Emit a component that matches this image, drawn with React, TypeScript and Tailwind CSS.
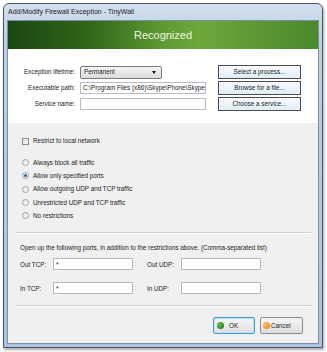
import React from 'react'

const FONT = { fontFamily: '"Liberation Sans", Arial, sans-serif' }

const RADIOS = [
  { label: 'Always block all traffic', checked: false },
  { label: 'Allow only specified ports', checked: true },
  { label: 'Allow outgoing UDP and TCP traffic', checked: false },
  { label: 'Unrestricted UDP and TCP traffic', checked: false },
  { label: 'No restrictions', checked: false },
]

function Field({ value = '', className = '' }: { value?: string; className?: string }) {
  return (
    <div
      className={`flex h-[12px] items-center overflow-hidden whitespace-nowrap border border-[#b7bcc4] bg-white pl-[2px] text-[6.3px] text-[#222] ${className}`}
    >
      {value}
    </div>
  )
}

function PickButton({ label }: { label: string }) {
  return (
    <div className="flex h-[14px] w-[83px] items-center justify-center border border-[#4d4d4d] bg-gradient-to-b from-[#f5f9fd] to-[#e2edf9] text-[6.3px] text-[#222]">
      {label}
    </div>
  )
}

function Radio({ checked }: { checked: boolean }) {
  return (
    <div className="flex size-[7px] items-center justify-center rounded-full border border-[#9aa0a6] bg-gradient-to-br from-[#e4e4e4] to-[#fbfbfb]">
      {checked && <div className="size-[3px] rounded-full bg-[#1c5fa8]" />}
    </div>
  )
}

export default function App() {
  return (
    <div className="h-[352px] w-[327px] bg-white pl-[3px] pt-[3px]" style={FONT}>
      {/* Window frame */}
      <div className="flex h-[345px] w-[320px] flex-col rounded-t-[6px] border border-[#4b5560] bg-[linear-gradient(180deg,#d3e0ee_0%,#bcd0e7_10%,#a9c3e2_100%)] shadow-[1px_2px_3px_rgba(0,0,0,0.35)]">
        {/* Title bar */}
        <div className="flex h-[16px] items-center pl-[4px] text-[7px] text-[#1a1a1a]">
          Add/Modify Firewall Exception - TinyWall
        </div>

        {/* Client area */}
        <div className="mx-[3px] mb-[3px] flex flex-1 flex-col border border-[#7d8ea2] bg-[#f0f0f0]">
          {/* Header */}
          <div className="flex h-[28px] items-center justify-center bg-[linear-gradient(90deg,#1c4712_0%,#2f6419_25%,#5d9a32_50%,#6ea83c_62%,#5c9834_80%,#4a8a2b_100%)] text-[11px] text-[#eef5e8]">
            Recognized
          </div>

          {/* App selection */}
          <div className="flex h-[74px] flex-col bg-white pt-[15px]">
            <div className="flex h-[16px] items-center">
              <div className="w-[67px] text-right text-[6.3px] text-[#222]">Exception lifetime:</div>
              <div className="ml-[5px] flex h-[13px] w-[82px] items-center justify-between rounded-[2px] border border-[#7a7a7a] bg-gradient-to-b from-[#f4f4f4] to-[#dcdcdc] pl-[3px] pr-[5px] text-[6.3px] text-[#222]">
                Permanent
                <span className="h-0 w-0 border-x-[2.5px] border-t-[3px] border-x-transparent border-t-[#111]" />
              </div>
              <div className="ml-[56px]">
                <PickButton label="Select a process..." />
              </div>
            </div>
            <div className="flex h-[16px] items-center">
              <div className="w-[67px] text-right text-[6.3px] text-[#222]">Executable path:</div>
              <Field className="ml-[5px] w-[126px]" value={'C:\\Program Files (x86)\\Skype\\Phone\\Skype.exe'} />
              <div className="ml-[12px]">
                <PickButton label="Browse for a file..." />
              </div>
            </div>
            <div className="flex h-[16px] items-center">
              <div className="w-[67px] text-right text-[6.3px] text-[#222]">Service name:</div>
              <Field className="ml-[5px] w-[126px]" />
              <div className="ml-[12px]">
                <PickButton label="Choose a service..." />
              </div>
            </div>
          </div>

          {/* Options */}
          <div className="flex flex-1 flex-col pt-[12px] text-[6.3px] text-[#222]">
            <div className="flex h-[12px] items-center gap-[4px] pl-[14px]">
              <div className="size-[7px] border border-[#8e8f8f] bg-gradient-to-br from-[#dcdcdc] to-[#fafafa]" />
              Restrict to local network
            </div>

            <div className="mt-[9px] flex flex-col">
              {RADIOS.map((r) => (
                <div key={r.label} className="flex h-[13.25px] items-center gap-[4px] pl-[14px]">
                  <Radio checked={r.checked} />
                  {r.label}
                </div>
              ))}
            </div>

            <div className="mx-[7px] mt-[10px] h-[2px] border-t border-[#cfcfcf] bg-white" />

            <div className="mt-[8px] flex h-[10px] items-center pl-[12px]">
              Open up the following ports, in addition to the restrictions above. (Comma-separated list)
            </div>

            <div className="mt-[6px] flex h-[12px] items-center pl-[12px]">
              <div className="w-[33px]">Out TCP:</div>
              <Field className="w-[80px]" value="*" />
              <div className="ml-[14px] w-[34px]">Out UDP:</div>
              <Field className="w-[80px]" />
            </div>

            <div className="mt-[12px] flex h-[12px] items-center pl-[12px]">
              <div className="w-[33px]">In TCP:</div>
              <Field className="w-[80px]" value="*" />
              <div className="ml-[14px] w-[34px]">In UDP:</div>
              <Field className="w-[80px]" />
            </div>

            <div className="mx-[7px] mt-[11px] h-[2px] border-t border-[#cfcfcf] bg-white" />

            <div className="mt-[10px] flex justify-end gap-[5px] pr-[15px]">
              <div className="flex h-[17px] w-[42px] items-center gap-[5px] rounded-[2px] border border-[#3d9bd8] bg-gradient-to-b from-[#f6f6f6] to-[#dedede] pl-[3px] shadow-[inset_0_0_0_1px_#bfe4f8]">
                <span className="size-[7px] rounded-full bg-[radial-gradient(circle_at_35%_35%,#5bc24a,#0f6a0f)]" />
                OK
              </div>
              <div className="flex h-[17px] w-[43px] items-center gap-[1px] rounded-[2px] border border-[#8d8d8d] bg-gradient-to-b from-[#f6f6f6] to-[#dedede] pl-[2px]">
                <span className="size-[7px] rounded-full bg-[radial-gradient(circle_at_35%_35%,#ffc266,#e8770c)]" />
                Cancel
              </div>
            </div>
          </div>
        </div>
      </div>
    </div>
  )
}
